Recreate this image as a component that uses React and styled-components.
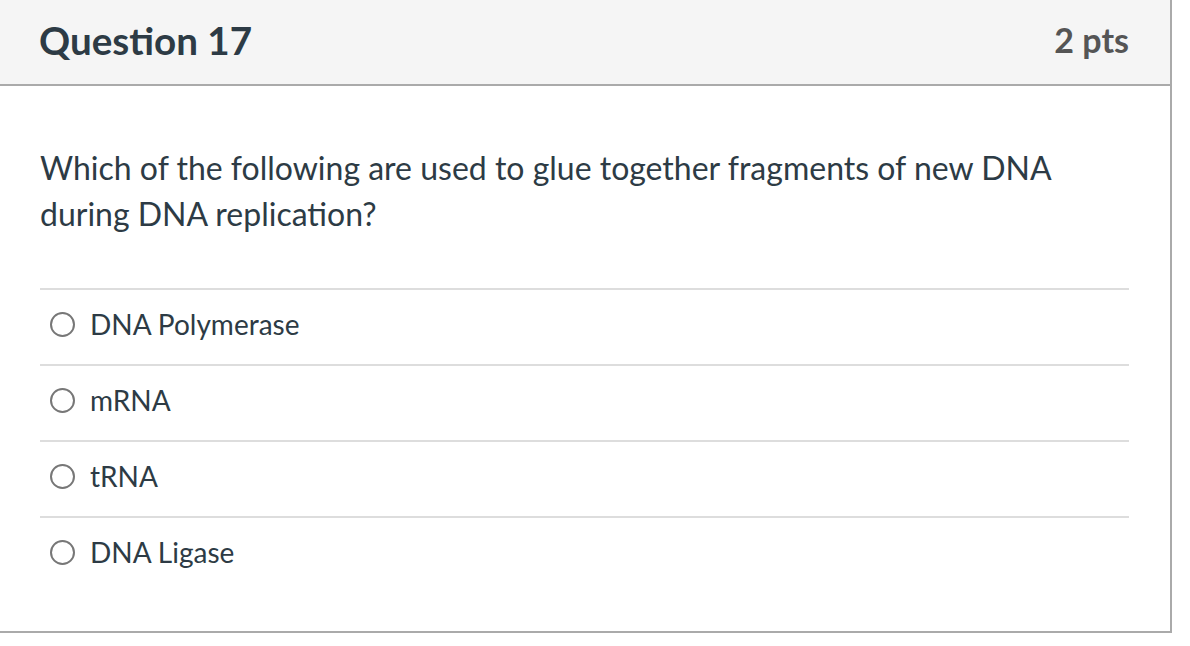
import React from "react";
import styled, { createGlobalStyle } from "styled-components";

const GlobalStyle = createGlobalStyle`
  html, body {
    margin: 0;
    padding: 0;
    background: #ffffff;
  }
  body {
    font-family: Lato, "Open Sans", "Liberation Sans", sans-serif;
    color: #2d3b45;
  }
`;

const Card = styled.section`
  width: 1170px;
  margin: -2px 0 0 -2px;
  border: 2px solid #aaaaaa;
  background: #ffffff;
`;

const Header = styled.header`
  display: flex;
  align-items: center;
  justify-content: space-between;
  height: 86px;
  padding: 0 41px 4px 39px;
  box-sizing: border-box;
  background: #f5f5f5;
  border-bottom: 2px solid #aaaaaa;
`;

const Title = styled.h2`
  margin: 0;
  font-size: 38.6px;
  font-weight: 700;
  color: #2d3b45;
  line-height: 1;
`;

const Points = styled.span`
  font-size: 34px;
  font-weight: 700;
  color: #555555;
  line-height: 1;
`;

const Body = styled.div`
  padding: 59px 41px 39px 40px;
`;

const Prompt = styled.p`
  margin: 0 0 51px;
  font-size: 32px;
  line-height: 46px;
  color: #2d3b45;
`;

const Answers = styled.div`
  display: flex;
  flex-direction: column;
`;

const Answer = styled.label`
  display: flex;
  align-items: center;
  gap: 15px;
  height: 68px;
  padding: 0 0 6px 10px;
  border-top: 2px solid #dddddd;
  font-size: 28px;
  color: #2d3b45;
  cursor: pointer;
`;

const Radio = styled.span`
  width: 21px;
  height: 21px;
  border: 2px solid #777777;
  border-radius: 50%;
  flex: none;
`;

const options = ["DNA Polymerase", "mRNA", "tRNA", "DNA Ligase"];

export default function App() {
  return (
    <>
      <GlobalStyle />
      <Card>
        <Header>
          <Title>Question 17</Title>
          <Points>2 pts</Points>
        </Header>
        <Body>
          <Prompt>
            Which of the following are used to glue together fragments of new DNA
            <br />
            during DNA replication?
          </Prompt>
          <Answers>
            {options.map((o) => (
              <Answer key={o}>
                <Radio />
                {o}
              </Answer>
            ))}
          </Answers>
        </Body>
      </Card>
    </>
  );
}
